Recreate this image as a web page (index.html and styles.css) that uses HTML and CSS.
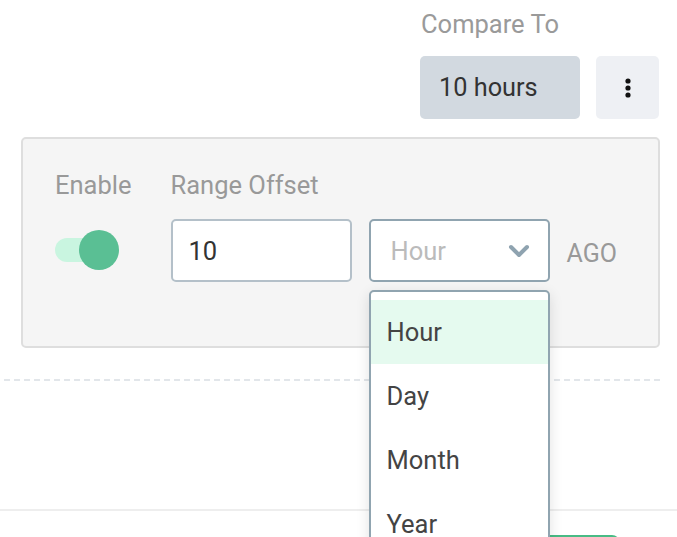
FILE: index.html
```html
<!DOCTYPE html>
<html>
<head>
<meta charset="utf-8">
<link rel="stylesheet" href="styles.css">
</head>
<body>
<div class="page">
  <div class="compare">
    <div class="compare-label">Compare To</div>
    <div class="compare-row">
      <div class="compare-value">10 hours</div>
      <div class="kebab">
        <svg width="6" height="20" viewBox="0 0 6 20"><circle cx="3" cy="3" r="2.6" fill="#111"/><circle cx="3" cy="10" r="2.6" fill="#111"/><circle cx="3" cy="17" r="2.6" fill="#111"/></svg>
      </div>
    </div>
  </div>

  <div class="panel">
    <div class="field field-enable">
      <div class="label">Enable</div>
      <div class="toggle-wrap">
        <div class="toggle"><div class="knob"></div></div>
      </div>
    </div>
    <div class="field">
      <div class="label">Range Offset</div>
      <div class="controls">
        <div class="input">10</div>
        <div class="select">
          <span class="placeholder">Hour</span>
          <svg class="chevron" width="22" height="14" viewBox="0 0 22 14"><path d="M3 3 L11 11 L19 3" fill="none" stroke="#8fa3b0" stroke-width="4" stroke-linecap="round" stroke-linejoin="round"/></svg>
          <div class="menu">
            <div class="menu-item active">Hour</div>
            <div class="menu-item">Day</div>
            <div class="menu-item">Month</div>
            <div class="menu-item">Year</div>
          </div>
        </div>
        <div class="ago">AGO</div>
      </div>
    </div>
  </div>

  <div class="dashed"></div>
  <div class="spacer"></div>
  <div class="solid"></div>
  <div class="footer">
    <div class="green-btn"></div>
  </div>
</div>
</body>
</html>
```
FILE: styles.css
```css
html, body {
  margin: 0;
  padding: 0;
  background: #fff;
}
body {
  font-family: Roboto, "Liberation Sans", sans-serif;
  width: 677px;
  height: 537px;
  overflow: hidden;
}
.page {
  display: flex;
  flex-direction: column;
  height: 537px;
  overflow: hidden;
}
.page > * {
  flex-shrink: 0;
}
.compare {
  align-self: flex-start;
  margin-left: 420px;
  padding-top: 8px;
  display: flex;
  flex-direction: column;
}
.compare-label {
  font-size: 25.5px;
  line-height: 32px;
  color: #9a9a9a;
  padding-left: 1px;
  margin-bottom: 16px;
}
.compare-row {
  display: flex;
  gap: 16px;
}
.compare-value {
  width: 160px;
  height: 63px;
  box-sizing: border-box;
  padding-left: 19px;
  background: #d2d9e0;
  border-radius: 5px;
  display: flex;
  align-items: center;
  font-size: 25.3px;
  color: #333;
}
.kebab {
  width: 63px;
  height: 63px;
  background: #eef0f4;
  border-radius: 5px;
  display: flex;
  align-items: center;
  justify-content: center;
}
.panel {
  margin-top: 18px;
  margin-left: 21px;
  width: 639px;
  height: 211px;
  box-sizing: border-box;
  border: 2px solid #dedede;
  border-radius: 5px;
  background: #f5f5f5;
  display: flex;
  padding: 31px 0 0 32px;
  gap: 39px;
}
.field {
  display: flex;
  flex-direction: column;
}
.label {
  font-size: 25.5px;
  line-height: 30px;
  color: #999;
  height: 30px;
  margin-bottom: 19px;
}
.toggle-wrap {
  height: 62px;
  display: flex;
  align-items: center;
}
.toggle {
  position: relative;
  width: 40px;
  height: 24px;
  border-radius: 12px;
  background: #c9f5e0;
}
.knob {
  position: absolute;
  left: 24px;
  top: -8px;
  width: 40px;
  height: 40px;
  border-radius: 50%;
  background: #5abf94;
}
.controls {
  display: flex;
  align-items: center;
  gap: 17px;
}
.input, .select {
  width: 181px;
  height: 63px;
  box-sizing: border-box;
  border-radius: 5px;
  background: #fff;
  display: flex;
  align-items: center;
  font-size: 25.5px;
}
.input {
  border: 2px solid #b4c0c9;
  padding-left: 16px;
  color: #333;
}
.select {
  position: relative;
  border: 2px solid #90a4b0;
  padding-left: 20px;
  padding-right: 18px;
  justify-content: space-between;
}
.placeholder {
  color: #bbb;
}
.menu {
  position: absolute;
  left: -2px;
  top: 69px;
  width: 181px;
  box-sizing: border-box;
  border: 2px solid #90a4b0;
  border-radius: 5px 5px 0 0;
  background: #fff;
  padding-top: 8px;
  box-shadow: 0 4px 14px rgba(0,0,0,0.12);
  z-index: 10;
}
.menu-item {
  height: 64px;
  display: flex;
  align-items: center;
  padding-left: 16px;
  font-size: 25.5px;
  color: #444;
}
.menu-item.active {
  background: #e5faef;
}
.ago {
  font-size: 25px;
  color: #999;
  padding-top: 6px;
}
.dashed {
  margin-top: 31px;
  margin-left: 4px;
  width: 656px;
  height: 2px;
  background-image: linear-gradient(to right, #e2e6ea 6px, transparent 6px);
  background-size: 10px 2px;
}
.spacer {
  height: 128px;
}
.solid {
  height: 2px;
  background: #eeeeee;
}
.footer {
  height: 40px;
  position: relative;
}
.green-btn {
  position: absolute;
  left: 540px;
  top: 24px;
  width: 80px;
  height: 30px;
  border-radius: 8px;
  background: #48bb85;
}
```
